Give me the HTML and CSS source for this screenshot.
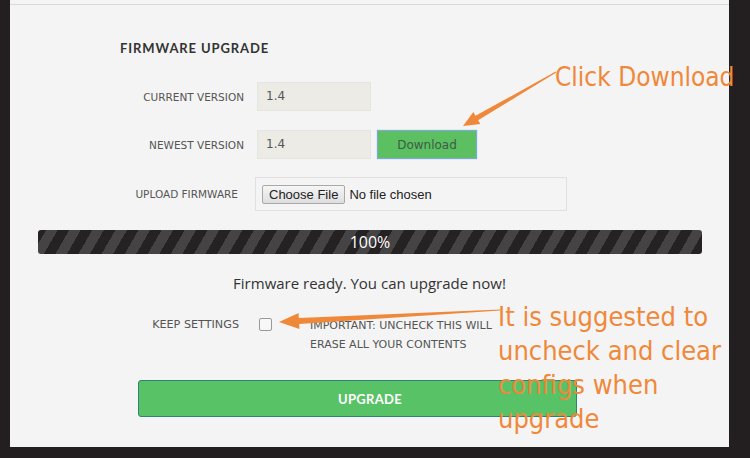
FILE: index.html
```html
<!DOCTYPE html>
<html>
<head>
<meta charset="utf-8">
<link rel="stylesheet" href="styles.css">
</head>
<body>
<div class="panel">
  <h2 class="title">FIRMWARE UPGRADE</h2>
  <div class="row row-current">
    <span class="label">CURRENT VERSION</span>
    <div class="field">1.4</div>
  </div>
  <div class="row row-newest">
    <span class="label">NEWEST VERSION</span>
    <div class="field">1.4</div>
    <button class="download">Download</button>
  </div>
  <div class="row row-upload">
    <span class="label label-upload">UPLOAD FIRMWARE</span>
    <div class="filebox">
      <span class="choose">Choose File</span>
      <span class="nofile">No file chosen</span>
    </div>
  </div>
  <div class="progress"><span>100%</span></div>
  <p class="ready">Firmware ready. You can upgrade now!</p>
  <div class="row row-keep">
    <span class="label label-keep">KEEP SETTINGS</span>
    <span class="checkbox"></span>
    <span class="warning">IMPORTANT: UNCHECK THIS WILL<br>ERASE ALL YOUR CONTENTS</span>
  </div>
  <button class="upgrade">UPGRADE</button>

  <div class="note note-download">Click Download</div>
  <div class="note note-keep">It is suggested to<br>uncheck and clear<br>configs when<br>upgrade</div>
  <svg class="arrows" width="750" height="458" viewBox="0 0 750 458">
    <polygon fill="#f0883a" points="555.7,71.6 475.5,115.8 473.3,111.9 463,126 480.3,124.1 478.1,120.2 556.3,72.4"/>
    <polygon fill="#f0883a" points="500,309.5 298.8,317.9 298.6,312.9 279,322 299.4,328.9 299.2,323.9 500,310.5"/>
  </svg>
</div>
</body>
</html>
```
FILE: styles.css
```css
html, body {
  margin: 0;
  padding: 0;
  background: #231f20;
  width: 750px;
  height: 458px;
  overflow: hidden;
}
.panel {
  position: relative;
  margin-left: 10px;
  width: 719px;
  height: 443px;
  background: #f4f4f4;
  border-top: 4px solid #f4f4f4;
  box-shadow: inset 0 1px 0 #d9d9d9;
  font-family: "DejaVu Sans", Verdana, sans-serif;
  color: #555;
}
.title {
  margin: 0;
  padding: 37px 0 0 110px;
  font-family: Lato, sans-serif;
  font-weight: 700;
  font-size: 13px;
  letter-spacing: 0.9px;
  color: #333;
  line-height: 14px;
}
.row {
  display: flex;
  align-items: center;
}
.label {
  width: 234px;
  text-align: right;
  font-size: 10.5px;
  color: #555;
  flex: none;
}
.field {
  margin-left: 13px;
  width: 114px;
  height: 29px;
  padding-left: 8px;
  box-sizing: border-box;
  background: #ecebe5;
  border: 1px solid #e6e4de;
  font-size: 12px;
  line-height: 27px;
  color: #555;
}
.row-current { margin-top: 27px; }
.row-newest { margin-top: 19px; }
.download {
  margin-left: 6px;
  width: 100px;
  height: 29px;
  background: #5cbf62;
  border: 1px solid #7ea9dc;
  box-shadow: 0 0 1px #7ea9dc;
  font-family: "DejaVu Sans", Verdana, sans-serif;
  font-size: 12px;
  color: #3c5c44;
  padding: 0;
}
.row-upload { margin-top: 18px; }
.label-upload { width: 228px; }
.filebox {
  margin-left: 17px;
  width: 312px;
  height: 34px;
  box-sizing: border-box;
  border: 1px solid #e0e0e0;
  display: flex;
  align-items: center;
  padding-left: 6px;
}
.choose {
  font-family: "Liberation Sans", Arial, sans-serif;
  font-size: 13px;
  color: #222;
  background: linear-gradient(#f6f6f6, #dedede);
  border: 1px solid #a9a9a9;
  border-radius: 2px;
  padding: 1px 6px;
  line-height: 15px;
}
.nofile {
  margin-left: 4px;
  font-family: "Liberation Sans", Arial, sans-serif;
  font-size: 13px;
  color: #222;
}
.progress {
  margin: 19px 0 0 28px;
  width: 664px;
  height: 24px;
  border-radius: 3px;
  background: repeating-linear-gradient(-60deg, #252223 0, #252223 10px, #464344 10px, #464344 20px);
  display: flex;
  align-items: center;
  justify-content: center;
}
.progress span {
  font-family: "Open Sans", sans-serif;
  font-weight: 500;
  font-size: 16px;
  color: #fff;
}
.ready {
  margin: 19px 0 0 0;
  text-align: center;
  font-family: "Open Sans", sans-serif;
  font-size: 15px;
  color: #333;
  line-height: 20px;
}
.row-keep {
  margin-top: 25px;
  align-items: flex-start;
}
.label-keep {
  width: 229px;
  font-size: 11.2px;
  line-height: 14px;
}
.checkbox {
  margin-left: 20px;
  width: 11px;
  height: 11px;
  border: 1px solid #999;
  border-radius: 2px;
  background: #f7f7f7;
  flex: none;
}
.warning {
  margin-left: 38px;
  font-size: 11px;
  line-height: 19px;
  margin-top: -2px;
  color: #555;
}
.upgrade {
  display: block;
  margin: 26px 0 0 128px;
  width: 439px;
  height: 37px;
  background: #58c267;
  border: 1px solid #2e8470;
  border-radius: 3px;
  color: #fff;
  font-family: Lato, sans-serif;
  font-weight: 700;
  font-size: 13px;
  letter-spacing: 0.3px;
  padding: 0 0 0 25px;
}
.note {
  position: absolute;
  font-family: "DejaVu Sans Condensed", "DejaVu Sans", sans-serif;
  color: #f0883a;
}
.note-download {
  left: 545px;
  top: 58px;
  font-size: 26px;
  white-space: nowrap;
}
.note-keep {
  left: 488px;
  top: 296px;
  font-size: 27px;
  line-height: 34px;
}
.arrows {
  position: absolute;
  left: -10px;
  top: -4px;
  pointer-events: none;
}
```
